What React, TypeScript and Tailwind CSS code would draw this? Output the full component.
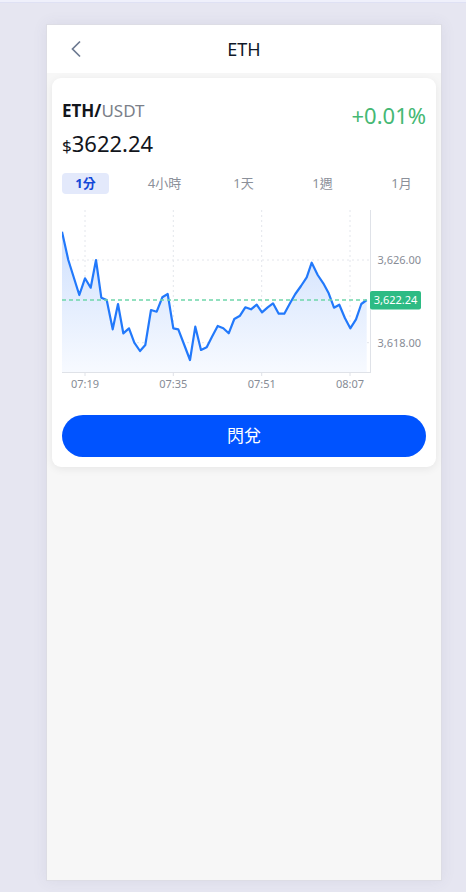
import React from "react";

const points: [number, number][] = [
  [0, 26.7], [6.3, 55], [17.3, 90], [23, 73.3], [28.7, 82.7], [34, 55], [39.3, 92.7],
  [44.7, 95], [50.7, 124.3], [56, 99], [61.3, 128.3], [67, 123.3], [72.3, 137.7],
  [78, 146], [83.3, 140], [89, 105], [94.7, 106.7], [100.3, 92.3], [105.7, 89],
  [111.3, 123.3], [116.3, 124.3], [122.3, 140], [128, 155], [133.3, 121.7], [139, 145],
  [144.7, 142.3], [150, 131.7], [155.7, 121], [161.3, 123.3], [166.7, 128.3],
  [172.3, 114], [178, 110.7], [183.3, 102.3], [189, 104.3], [194.7, 99.7], [200, 107.3],
  [205.7, 102.3], [211, 98.3], [216.7, 108.7], [222.3, 108.7], [228, 98.3], [233.3, 89],
  [239, 81], [244.7, 72.3], [249.7, 57.7], [255.7, 70], [261.3, 78.3], [266.7, 88.3],
  [272, 102.7], [277.3, 99.7], [283, 113.3], [288.3, 123.3], [294, 114.3], [299.3, 99],
  [304.7, 95],
];

const tabs = ["1分", "4小時", "1天", "1週", "1月"];
const times = [
  { x: 23, label: "07:19" },
  { x: 111.3, label: "07:35" },
  { x: 199.7, label: "07:51" },
  { x: 288, label: "08:07" },
];

const PriceChart = () => {
  const line = points.map(([x, y], i) => `${i ? "L" : "M"}${x} ${y}`).join(" ");
  const area = `${line} L304.7 167 L0 167 Z`;
  return (
    <svg width="364" height="185" viewBox="0 0 364 185" className="block">
      <defs>
        <linearGradient id="fillGrad" x1="0" y1="0" x2="0" y2="1">
          <stop offset="0%" stopColor="#cfe0fd" />
          <stop offset="100%" stopColor="#f7faff" />
        </linearGradient>
      </defs>
      {times.map((t) => (
        <line key={t.x} x1={t.x} y1={5} x2={t.x} y2={167} stroke="#e3e6ec" strokeDasharray="2 3" />
      ))}
      <line x1={0} y1={55} x2={308} y2={55} stroke="#e3e6ec" strokeDasharray="2 3" />
      <line x1={0} y1={137.7} x2={308} y2={137.7} stroke="#e3e6ec" strokeDasharray="2 3" />
      <path d={area} fill="url(#fillGrad)" />
      <path d={line} fill="none" stroke="#2279fb" strokeWidth="2.2" strokeLinejoin="round" />
      <line x1={0} y1={95} x2={308} y2={95} stroke="#6fd6aa" strokeWidth="1.3" strokeDasharray="4 3" />
      <line x1={308.5} y1={5} x2={308.5} y2={167} stroke="#dfe2e8" />
      <line x1={0} y1={167.5} x2={309} y2={167.5} stroke="#dfe2e8" />
      {times.map((t) => (
        <line key={"t" + t.x} x1={t.x} y1={167} x2={t.x} y2={171} stroke="#dfe2e8" />
      ))}
      <g fontFamily="'Noto Sans', sans-serif" fontSize="11" fill="#878c96">
        <text x="315.5" y="59">3,626.00</text>
        <text x="315.5" y="141.7">3,618.00</text>
        {times.map((t) => (
          <text key={"l" + t.x} x={t.x} y="183" textAnchor="middle">
            {t.label}
          </text>
        ))}
      </g>
      <rect x="308" y="86" width="51" height="18.5" rx="2" fill="#2dbb84" />
      <text
        x="333.5"
        y="99"
        textAnchor="middle"
        fontFamily="'Noto Sans', sans-serif"
        fontSize="11"
        fill="#ffffff"
      >
        3,622.24
      </text>
    </svg>
  );
};

const App = () => {
  return (
    <div
      className="min-h-[892px] bg-[#e6e6f1] flex flex-col"
      style={{ fontFamily: "'Noto Sans', 'Noto Sans CJK TC', sans-serif" }}
    >
      <div className="h-[3px] bg-[#eff0fb] border-b border-[#dfe1f4]" />
      <div className="ml-[46px] mt-[21px] w-[396px] h-[857px] bg-[#f7f7f7] border border-[#dddde5] shadow-[0_0_14px_rgba(80,80,120,0.08)] flex flex-col">
        <header className="h-[48px] bg-white flex items-center relative">
          <svg width="12" height="18" viewBox="0 0 12 18" className="ml-[23px]">
            <path d="M10 1.5 L2.5 9 L10 16.5" fill="none" stroke="#6d7a91" strokeWidth="1.7" />
          </svg>
          <h1 className="absolute left-0 right-0 text-center text-[18px] leading-[24px] text-[#101828] pointer-events-none">
            ETH
          </h1>
        </header>
        <div className="pt-[5px] px-[5px]">
          <div className="bg-white rounded-[9px] shadow-[0_2px_8px_rgba(0,0,0,0.07)] px-[10px] pt-[21px] pb-[10px]">
            <div className="flex justify-between items-start">
              <div>
                <div className="text-[17px] leading-[24px]">
                  <span className="font-bold text-[#12151c]">ETH/</span>
                  <span className="text-[#7b8089]">USDT</span>
                </div>
                <div className="mt-[5px] leading-[30px] text-[#12151c]">
                  <span className="text-[17px]">$</span>
                  <span className="text-[22px]">3622.24</span>
                </div>
              </div>
              <div className="mt-[2px] text-[22px] leading-[28px] text-[#45b874]">+0.01%</div>
            </div>
            <div className="mt-[12px] flex gap-[32px]">
              {tabs.map((t, i) => (
                <div
                  key={t}
                  className={
                    i === 0
                      ? "w-[47px] h-[21px] rounded-[4px] bg-[#e3e9fb] text-[#1448d8] font-bold text-[13px] leading-[21px] text-center"
                      : "w-[47px] h-[21px] text-[#8b909a] text-[13px] leading-[21px] text-center"
                  }
                >
                  {t}
                </div>
              ))}
            </div>
            <div className="mt-[11px]">
              <PriceChart />
            </div>
            <button className="mt-[25px] w-full h-[42px] rounded-full bg-[#0053ff] text-white text-[17px]">
              閃兌
            </button>
          </div>
        </div>
      </div>
    </div>
  );
};

export default App;
